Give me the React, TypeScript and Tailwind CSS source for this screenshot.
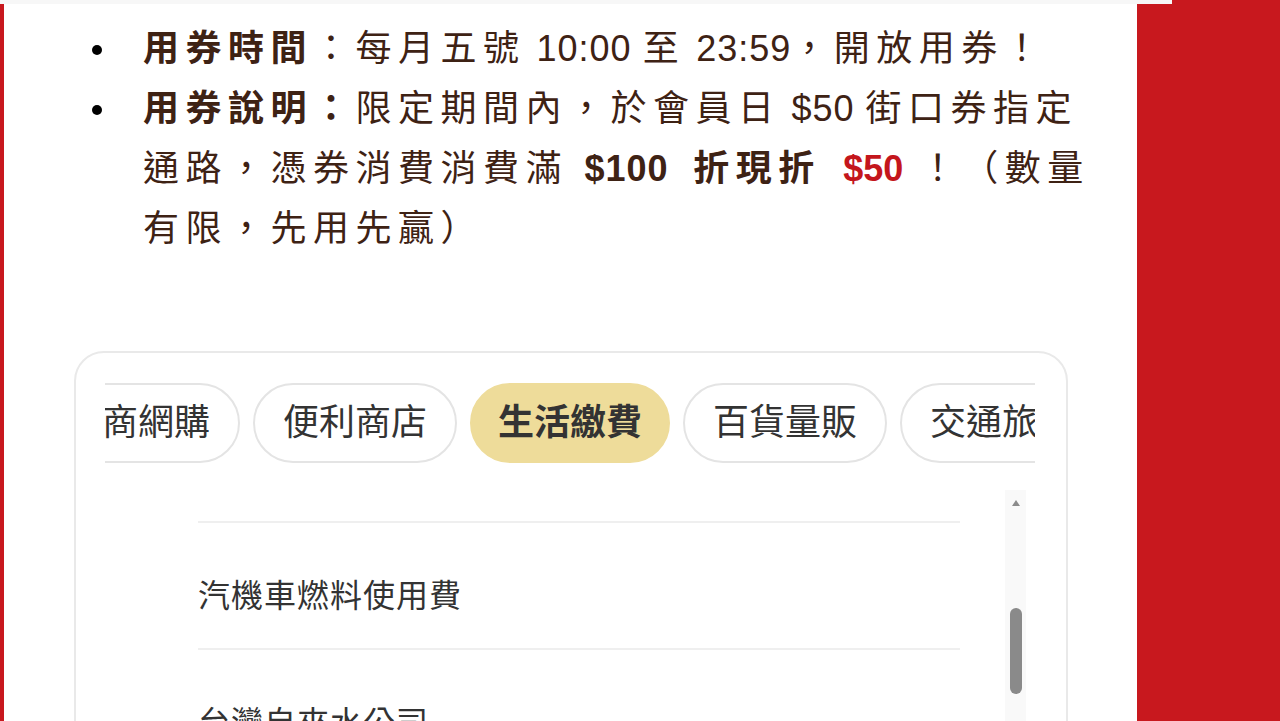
import React from "react";

// 會員日街口券活動說明 + 適用通路分類
const tabs = ["電商網購", "便利商店", "生活繳費", "百貨量販", "交通旅遊"];
const ACTIVE_TAB = "生活繳費";
const stores = ["汽機車燃料使用費", "台灣自來水公司", "台北自來水事業處"];

function Bullet() {
  return <span className="mt-[26px] h-[10px] w-[10px] shrink-0 rounded-full bg-black" aria-hidden="true" />;
}

export default function App() {
  return (
    <div className="relative h-[721px] w-[1280px] overflow-hidden bg-[#c8181e] font-['Liberation_Sans','Noto_Sans_CJK_TC',sans-serif]">
      {/* sticky header edge sitting over the scrolled content */}
      <div className="absolute left-0 top-0 z-10 h-[4px] w-[1172px] bg-[#f7f7f7]" />

      <div className="ml-[4px] h-full w-[1133px] overflow-hidden bg-white">
        <ul className="-mt-[41px] text-[36px] leading-[60px] tracking-[6.5px] text-[#3e2214]">
          <li className="flex gap-[41px] pl-[88px]">
            <span className="h-[10px] w-[10px] shrink-0" />
            <p className="w-[950px]">…等。</p>
          </li>
          <li className="flex gap-[41px] pl-[88px]">
            <Bullet />
            <p className="w-[950px]">
              <b>用券時間</b>：每月五號<span className="tracking-[1px]"> 10:00 </span>至
              <span className="tracking-[1px]"> 23:59</span>，開放用券！
            </p>
          </li>
          <li className="flex gap-[41px] pl-[88px]">
            <Bullet />
            <p className="w-[950px]">
              <b>用券說明：</b>限定期間內，於會員日<span className="tracking-[1px]"> $50 </span>街口券指定通路，憑券消費消費滿{" "}
              <b>
                <span className="tracking-[1px]">$100</span>
                <span className="ml-[8px]"> 折現折</span>
              </b>{" "}
              <b className="ml-[6px] tracking-[0px] text-[#c4161c]">$50</b> ！（數量有限，先用先贏）
            </p>
          </li>
        </ul>

        <section className="ml-[70px] mt-[92px] h-[420px] w-[994px] rounded-[30px] border-2 border-[#e9e9e9] pl-[29px] pt-[30px]">
          <div className="w-[930px] overflow-hidden">
            <div className="-ml-[69px] flex gap-[13px]">
              {tabs.map((t) => (
                <button
                  key={t}
                  type="button"
                  className={
                    t === ACTIVE_TAB
                      ? "h-[80px] shrink-0 rounded-full border-2 border-[#eedc9a] bg-[#eedc9a] px-[26px] text-[36px] font-bold text-[#333333]"
                      : "h-[80px] shrink-0 rounded-full border-2 border-[#e4e4e4] bg-white px-[28px] text-[36px] text-[#333333]"
                  }
                >
                  {t}
                </button>
              ))}
            </div>
          </div>

          <div className="mt-[27px] flex h-[260px]">
            <ul className="ml-[93px] w-[762px] pt-[31px] text-[32px] leading-[36px] tracking-[1px] text-[#333333]">
              {stores.map((s) => (
                <li key={s} className="border-t-2 border-[#efefef] pb-[34px] pt-[55px]">
                  {s}
                </li>
              ))}
            </ul>
            <div className="ml-[45px] flex w-[21px] flex-col items-center bg-[#f9f9f9] pt-[10px]">
              <span className="h-0 w-0 border-x-[4px] border-b-[6px] border-x-transparent border-b-[#8c8c8c]" />
              <span className="mt-[102px] h-[86px] w-[12px] rounded-full bg-[#8a8a8a]" />
            </div>
          </div>
        </section>
      </div>
    </div>
  );
}
